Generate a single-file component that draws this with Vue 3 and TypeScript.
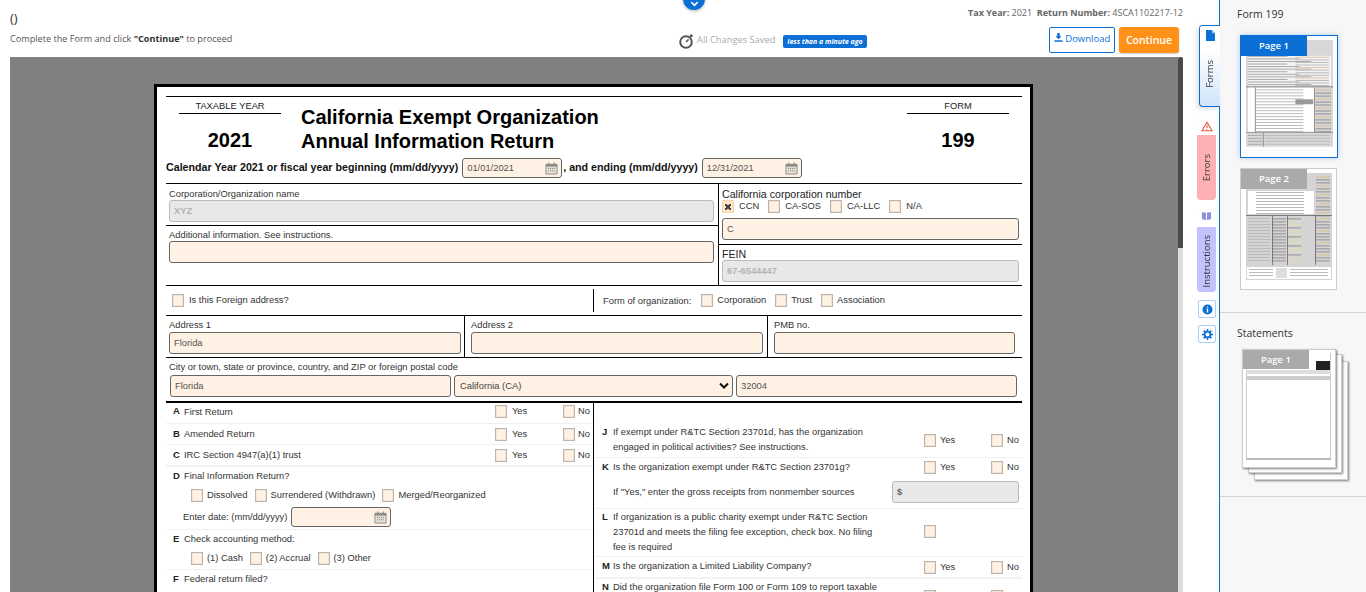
<script setup lang="ts">
interface Bar {
  x: number
  y: number
  w: number
  h: number
  c: string
}

const corpTypes = ['CCN', 'CA-SOS', 'CA-LLC', 'N/A']
const orgTypes = ['Corporation', 'Trust', 'Association']
const simpleRows = [
  { letter: 'A', text: 'First Return', cls: 'row-a' },
  { letter: 'B', text: 'Amended Return', cls: 'row-b' },
  { letter: 'C', text: 'IRC Section 4947(a)(1) trust', cls: 'row-c' },
]
const finalTypes = ['Dissolved', 'Surrendered (Withdrawn)', 'Merged/Reorganized']
const methods = ['(1) Cash', '(2) Accrual', '(3) Other']

// rough bars for the blurred page previews
const pageOneBars = (): Bar[] => {
  const bars: Bar[] = [{ x: 0, y: 0, w: 88, h: 112, c: '#d8d8d8' }]
  bars.push({ x: 2, y: 16, w: 84, h: 32, c: '#f2f2f2' })
  bars.push({ x: 2, y: 48, w: 68, h: 45, c: '#fff' })
  for (let i = 0; i < 12; i++) {
    bars.push({ x: 2, y: 16 + i * 2.6, w: 40 + (i % 3) * 12, h: 1, c: '#aaa' })
    bars.push({ x: 50, y: 17 + i * 2.6, w: 34, h: 1, c: i % 4 ? '#bbb' : '#d8c9a8' })
  }
  for (let i = 0; i < 15; i++) {
    bars.push({ x: 10, y: 50 + i * 3, w: 48, h: 1, c: '#bbb' })
    bars.push({ x: 70, y: 50 + i * 3, w: 16, h: 1.6, c: i % 3 ? '#aaa' : '#d8c9a8' })
  }
  bars.push({ x: 9, y: 48, w: 0.8, h: 46, c: '#777' })
  bars.push({ x: 69, y: 48, w: 0.8, h: 46, c: '#777' })
  bars.push({ x: 0, y: 47, w: 88, h: 0.8, c: '#666' })
  bars.push({ x: 50, y: 60, w: 18, h: 5, c: '#999' })
  bars.push({ x: 0, y: 93, w: 88, h: 0.8, c: '#888' })
  bars.push({ x: 17, y: 94, w: 0.8, h: 14, c: '#777' })
  for (let i = 0; i < 4; i++) {
    bars.push({ x: 2, y: 96 + i * 3, w: 14, h: 1, c: '#aaa' })
    bars.push({ x: 19, y: 96 + i * 3, w: 66, h: 1, c: '#bbb' })
  }
  bars.push({ x: 0, y: 108, w: 88, h: 4, c: '#fff' })
  return bars
}

const pageTwoBars = (): Bar[] => {
  const bars: Bar[] = [{ x: 0, y: 0, w: 86, h: 111, c: '#d4d4d4' }]
  bars.push({ x: 2, y: 18, w: 66, h: 23, c: '#fff' })
  for (let i = 0; i < 14; i++) {
    bars.push({ x: 70, y: 3 + i * 3, w: 14, h: 1.6, c: i % 3 ? '#aaa' : '#d8c9a8' })
    if (i < 8) bars.push({ x: 10, y: 19 + i * 3, w: 48, h: 1, c: '#bbb' })
  }
  bars.push({ x: 0, y: 42, w: 86, h: 0.8, c: '#666' })
  for (let i = 0; i < 15; i++) {
    bars.push({ x: 2, y: 45 + i * 3, w: 22, h: 1, c: '#bbb' })
    bars.push({ x: 26, y: 45 + i * 3, w: 14, h: 1.6, c: '#aaa' })
    bars.push({ x: 41, y: 45 + i * 3, w: 14, h: 1.6, c: i % 3 ? '#e0d8c0' : '#aaa' })
    bars.push({ x: 70, y: 45 + i * 3, w: 14, h: 1.6, c: i % 4 ? '#aaa' : '#d8c9a8' })
  }
  bars.push({ x: 26, y: 42, w: 0.8, h: 50, c: '#666' })
  bars.push({ x: 41, y: 42, w: 0.8, h: 50, c: '#666' })
  bars.push({ x: 69, y: 42, w: 0.8, h: 50, c: '#666' })
  bars.push({ x: 1, y: 94, w: 84, h: 12, c: '#fff' })
  bars.push({ x: 30, y: 95, w: 11, h: 10, c: '#ddd' })
  for (let i = 0; i < 3; i++) {
    bars.push({ x: 3, y: 96 + i * 3, w: 24, h: 1, c: '#bbb' })
    bars.push({ x: 44, y: 96 + i * 3, w: 38, h: 1, c: '#bbb' })
  }
  bars.push({ x: 0, y: 107, w: 86, h: 4, c: '#fff' })
  return bars
}

const p1 = pageOneBars()
const p2 = pageTwoBars()
</script>

<template>
  <div class="app">
    <section class="main">
      <header class="top">
        <div class="top-left">
          <div class="zero">()</div>
          <p class="hint">Complete the Form and click <b>"Continue"</b> to proceed</p>
        </div>
        <div class="saved">
          <svg class="timer" viewBox="0 0 16 16" width="16" height="16">
            <circle cx="8" cy="9" r="5.8" fill="none" stroke="#555" stroke-width="2" />
            <path d="M8 9l2.6-2.6" stroke="#555" stroke-width="1.6" />
            <circle cx="13.2" cy="2.8" r="1.5" fill="#555" />
          </svg>
          <span class="saved-text">All Changes Saved</span>
          <span class="ago">less than a minute ago</span>
        </div>
        <div class="top-right">
          <div class="meta"><b>Tax Year:</b> 2021 &nbsp;<b>Return Number:</b> 4SCA1102217-12</div>
          <div class="actions">
            <button class="btn-download">
              <svg viewBox="0 0 10 10" width="9" height="9">
                <path d="M3.6 0h2.8v3.6h2L5 7 1.6 3.6h2zM.5 8h9v1.8h-9z" fill="#0b6fd6" />
              </svg>
              Download
            </button>
            <button class="btn-continue">Continue</button>
          </div>
        </div>
      </header>

      <div class="collapse">
        <svg viewBox="0 0 10 10" width="9" height="9">
          <path d="M1.5 3.5L5 7l3.5-3.5" fill="none" stroke="#fff" stroke-width="1.8" />
        </svg>
      </div>

      <div class="viewer-wrap">
        <div class="viewer">
          <div class="paper">
            <div class="form-head">
              <div class="side-col">
                <div class="small-head">TAXABLE YEAR</div>
                <div class="big">2021</div>
              </div>
              <h1 class="title">California Exempt Organization<br />Annual Information Return</h1>
              <div class="side-col right-col">
                <div class="small-head">FORM</div>
                <div class="big">199</div>
              </div>
            </div>

            <div class="cal-row">
              <span>Calendar Year 2021 or fiscal year beginning (mm/dd/yyyy)</span>
              <div class="date-field">
                01/01/2021
                <svg class="cal" viewBox="0 0 14 14" width="13" height="14">
                  <path d="M1 3h12v10.5H1z" fill="#e4e0d8" stroke="#8a8a8a" />
                  <path d="M1 3h12v2.5H1z" fill="#8a8a8a" />
                  <path d="M4 1v3M10 1v3" stroke="#8a8a8a" stroke-width="1.2" />
                  <path d="M3.5 7.5h7M3.5 10h7" stroke="#777" stroke-dasharray="1 1" />
                </svg>
              </div>
              <span class="and">, and ending (mm/dd/yyyy)</span>
              <div class="date-field">
                12/31/2021
                <svg class="cal" viewBox="0 0 14 14" width="13" height="14">
                  <path d="M1 3h12v10.5H1z" fill="#e4e0d8" stroke="#8a8a8a" />
                  <path d="M1 3h12v2.5H1z" fill="#8a8a8a" />
                  <path d="M4 1v3M10 1v3" stroke="#8a8a8a" stroke-width="1.2" />
                  <path d="M3.5 7.5h7M3.5 10h7" stroke="#777" stroke-dasharray="1 1" />
                </svg>
              </div>
            </div>

            <div class="org-block">
              <div class="org-left">
                <div class="cell name-cell">
                  <label class="lbl">Corporation/Organization name</label>
                  <div class="field off">XYZ</div>
                </div>
                <div class="cell extra-cell">
                  <label class="lbl">Additional information. See instructions.</label>
                  <div class="field"></div>
                </div>
              </div>
              <div class="org-right">
                <div class="cell ccn-cell">
                  <label class="lbl-big">California corporation number</label>
                  <div class="checks">
                    <span v-for="(c, i) in corpTypes" :key="c" class="check">
                      <i class="box" :class="{ checked: i === 0 }"></i>{{ c }}
                    </span>
                  </div>
                  <div class="field">C</div>
                </div>
                <div class="cell fein-cell">
                  <label class="lbl-big">FEIN</label>
                  <div class="field off">67-6544447</div>
                </div>
              </div>
            </div>

            <div class="foreign-row">
              <div class="foreign-left">
                <span class="check"><i class="box"></i>Is this Foreign address?</span>
              </div>
              <div class="foreign-right">
                <span class="org-label">Form of organization:</span>
                <span v-for="o in orgTypes" :key="o" class="check"><i class="box"></i>{{ o }}</span>
              </div>
            </div>

            <div class="addr-row">
              <div class="addr a1">
                <label class="lbl">Address 1</label>
                <div class="field">Florida</div>
              </div>
              <div class="addr a2">
                <label class="lbl">Address 2</label>
                <div class="field"></div>
              </div>
              <div class="addr a3">
                <label class="lbl">PMB no.</label>
                <div class="field"></div>
              </div>
            </div>

            <div class="city-row">
              <label class="lbl">City or town, state or province, country, and ZIP or foreign postal code</label>
              <div class="city-fields">
                <div class="field city">Florida</div>
                <div class="field state">
                  California (CA)
                  <svg viewBox="0 0 10 8" width="10" height="8">
                    <path d="M1 1.5l4 4 4-4" fill="none" stroke="#111" stroke-width="2" />
                  </svg>
                </div>
                <div class="field zip">32004</div>
              </div>
            </div>

            <div class="questions">
              <div class="q-left">
                <div v-for="r in simpleRows" :key="r.letter" class="q-row" :class="r.cls">
                  <b class="letter">{{ r.letter }}</b>
                  <span class="q-text">{{ r.text }}</span>
                  <span class="check yes"><i class="box"></i>Yes</span>
                  <span class="check no"><i class="box"></i>No</span>
                </div>
                <div class="q-block row-d">
                  <div class="q-head"><b class="letter">D</b><span>Final Information Return?</span></div>
                  <div class="opt-row">
                    <span v-for="f in finalTypes" :key="f" class="check"><i class="box"></i>{{ f }}</span>
                  </div>
                  <div class="date-row">
                    <span>Enter date: (mm/dd/yyyy)</span>
                    <div class="date-field">
                      <svg class="cal" viewBox="0 0 14 14" width="13" height="14">
                        <path d="M1 3h12v10.5H1z" fill="#e4e0d8" stroke="#8a8a8a" />
                        <path d="M1 3h12v2.5H1z" fill="#8a8a8a" />
                        <path d="M4 1v3M10 1v3" stroke="#8a8a8a" stroke-width="1.2" />
                        <path d="M3.5 7.5h7M3.5 10h7" stroke="#777" stroke-dasharray="1 1" />
                      </svg>
                    </div>
                  </div>
                </div>
                <div class="q-block row-e">
                  <div class="q-head"><b class="letter">E</b><span>Check accounting method:</span></div>
                  <div class="opt-row">
                    <span v-for="m in methods" :key="m" class="check"><i class="box"></i>{{ m }}</span>
                  </div>
                </div>
                <div class="q-block row-f">
                  <div class="q-head"><b class="letter">F</b><span>Federal return filed?</span></div>
                </div>
              </div>

              <div class="q-right">
                <div class="r-row row-j">
                  <b class="letter">J</b>
                  <span class="r-text">If exempt under R&amp;TC Section 23701d, has the organization<br />engaged in political activities? See instructions.</span>
                  <span class="check yes"><i class="box"></i>Yes</span>
                  <span class="check no"><i class="box"></i>No</span>
                </div>
                <div class="row-k">
                  <div class="r-row k-top">
                    <b class="letter">K</b>
                    <span class="r-text">Is the organization exempt under R&amp;TC Section 23701g?</span>
                    <span class="check yes"><i class="box"></i>Yes</span>
                    <span class="check no"><i class="box"></i>No</span>
                  </div>
                  <div class="r-row k-sub">
                    <b class="letter"></b>
                    <span class="r-text">If "Yes," enter the gross receipts from nonmember sources</span>
                    <div class="field off money">$</div>
                  </div>
                </div>
                <div class="r-row row-l">
                  <b class="letter">L</b>
                  <span class="r-text">If organization is a public charity exempt under R&amp;TC Section<br />23701d and meets the filing fee exception, check box. No filing<br />fee is required</span>
                  <span class="check yes"><i class="box"></i></span>
                </div>
                <div class="r-row row-m">
                  <b class="letter">M</b>
                  <span class="r-text">Is the organization a Limited Liability Company?</span>
                  <span class="check yes"><i class="box"></i>Yes</span>
                  <span class="check no"><i class="box"></i>No</span>
                </div>
                <div class="r-row row-n">
                  <b class="letter">N</b>
                  <span class="r-text">Did the organization file Form 100 or Form 109 to report taxable</span>
                  <span class="check yes"><i class="box"></i>Yes</span>
                  <span class="check no"><i class="box"></i>No</span>
                </div>
              </div>
            </div>
          </div>
        </div>
        <div class="scrollbar"><div class="thumb"></div></div>
      </div>
    </section>

    <nav class="tabs">
      <div class="tab tab-forms">
        <div class="tab-icon">
          <svg viewBox="0 0 10 12" width="9" height="11">
            <path d="M0 0h6.5L10 3.5V12H0z" fill="#0b6fd6" />
            <path d="M6.5 0v3.5H10" fill="#8cc0f2" />
          </svg>
        </div>
        <span class="tab-label">Forms</span>
      </div>
      <div class="tab tab-errors">
        <div class="tab-icon">
          <svg viewBox="0 0 14 12" width="12" height="11">
            <path d="M7 1l6 10H1z" fill="#fff" stroke="#e2553a" stroke-width="1.3" />
            <path d="M7 4.5v3.3M7 8.8v1" stroke="#e2553a" stroke-width="1.2" />
          </svg>
        </div>
        <span class="tab-label">Errors</span>
      </div>
      <div class="tab tab-instr">
        <div class="tab-icon">
          <svg viewBox="0 0 12 11" width="11" height="10">
            <path d="M1 1l4.5 1v8L1 9zM11 1L6.5 2v8L11 9z" fill="#8f8fe0" />
          </svg>
        </div>
        <span class="tab-label">Instructions</span>
      </div>
      <button class="mini info">
        <svg viewBox="0 0 12 12" width="11" height="11">
          <circle cx="6" cy="6" r="5.5" fill="#0b6fd6" />
          <path d="M6 2.6v1.2M6 5v4.2" stroke="#fff" stroke-width="1.5" />
        </svg>
      </button>
      <button class="mini gear">
        <svg viewBox="0 0 12 12" width="11" height="11">
          <circle cx="6" cy="6" r="3.2" fill="none" stroke="#0b6fd6" stroke-width="2" />
          <path d="M6 0v2.5M6 9.5V12M0 6h2.5M9.5 6H12M1.8 1.8l1.8 1.8M8.4 8.4l1.8 1.8M10.2 1.8L8.4 3.6M3.6 8.4l-1.8 1.8" stroke="#0b6fd6" stroke-width="1.7" />
        </svg>
      </button>
    </nav>

    <aside class="side">
      <section class="side-forms">
        <h3>Form 199</h3>
        <div class="thumb-page active">
          <div class="page-tag">Page 1</div>
          <svg class="preview" viewBox="0 0 88 112">
            <rect v-for="(b, i) in p1" :key="i" :x="b.x" :y="b.y" :width="b.w" :height="b.h" :fill="b.c" />
          </svg>
        </div>
        <div class="thumb-page second">
          <div class="page-tag">Page 2</div>
          <svg class="preview" viewBox="0 0 86 111">
            <rect v-for="(b, i) in p2" :key="i" :x="b.x" :y="b.y" :width="b.w" :height="b.h" :fill="b.c" />
          </svg>
        </div>
      </section>
      <section class="side-statements">
        <h3>Statements</h3>
        <div class="stack">
          <div class="sheet back2"></div>
          <div class="sheet back1"></div>
          <div class="sheet front">
            <div class="page-tag">Page 1</div>
            <div class="stmt-frame"></div>
            <div class="stmt-logo"></div>
            <div class="stmt-line one"></div>
            <div class="stmt-line two"></div>
            <div class="stmt-foot"></div>
          </div>
        </div>
      </section>
    </aside>
  </div>
</template>

<style scoped>
.app {
  display: flex;
  width: 1366px;
  height: 592px;
  overflow: hidden;
  background: #fff;
  font-family: "Liberation Sans", Arial, sans-serif;
}
.main {
  position: relative;
  width: 1198px;
  flex: none;
  display: flex;
  flex-direction: column;
}
.top {
  height: 57px;
  flex: none;
  display: flex;
  padding-left: 10px;
  font-family: "Open Sans", sans-serif;
}
.top-left {
  width: 658px;
  flex: none;
}
.zero {
  font-size: 13px;
  line-height: 14px;
  margin-top: 11px;
  color: #333;
}
.hint {
  margin: 7px 0 0;
  font-size: 9.15px;
  line-height: 13px;
  color: #555;
}
.hint b {
  color: #333;
}
.saved {
  display: flex;
  align-items: center;
  height: 16px;
  margin-top: 33px;
  margin-left: 10px;
}
.saved-text {
  margin-left: 3px;
  margin-bottom: 4px;
  font-size: 9.3px;
  color: #aaa;
}
.ago {
  margin-left: 8px;
  background: #0b6fd6;
  color: #fff;
  border-radius: 2px;
  font-size: 7px;
  font-weight: 700;
  font-style: italic;
  line-height: 13px;
  padding: 0 4px;
  white-space: nowrap;
}
.top-right {
  margin-left: auto;
  padding-right: 15px;
  display: flex;
  flex-direction: column;
  align-items: flex-end;
}
.meta {
  margin-top: 7px;
  font-size: 9px;
  line-height: 12px;
  color: #666;
  white-space: nowrap;
}
.actions {
  display: flex;
  gap: 4px;
  margin-top: 8px;
  margin-right: 4px;
}
.btn-download {
  width: 66px;
  height: 26px;
  box-sizing: border-box;
  background: #fff;
  border: 1px solid #0b6fd6;
  border-radius: 2px;
  color: #0b6fd6;
  font: 9.5px "Open Sans", sans-serif;
  padding: 0 0 4px;
}
.btn-continue {
  width: 60px;
  height: 26px;
  border: 0;
  border-radius: 3px;
  background: #ff9119;
  color: #fff;
  font: 600 10.5px "Open Sans", sans-serif;
  box-shadow: 0 1px 2px rgba(0, 0, 0, 0.2);
}
.collapse {
  position: absolute;
  left: 683px;
  top: -12px;
  width: 22px;
  height: 22px;
  border-radius: 50%;
  background: #0b6fd6;
  box-shadow: 0 1px 3px rgba(0, 0, 0, 0.3);
  display: flex;
  align-items: flex-end;
  justify-content: center;
}
.collapse svg {
  margin-bottom: 2px;
}
.viewer-wrap {
  flex: 1;
  min-height: 0;
  display: flex;
  padding-left: 10px;
}
.viewer {
  width: 1168px;
  flex: none;
  background: #808080;
  overflow: hidden;
  padding-top: 27px;
  box-sizing: border-box;
}
.scrollbar {
  width: 5px;
  background: #ddd;
}
.thumb {
  height: 191px;
  background: #4a4a4a;
  border-radius: 2px 2px 0 0;
}

/* the form page */
.paper {
  box-sizing: border-box;
  width: 879px;
  margin-left: 144px;
  background: #fff;
  border: 3px solid #000;
  padding: 9px 8px 0 9px;
  font-size: 9.35px;
  color: #333;
}
.form-head {
  display: flex;
  height: 60px;
  border-top: 1px solid #000;
  padding-left: 13px;
  padding-right: 13px;
}
.side-col {
  width: 102px;
  flex: none;
  text-align: center;
}
.small-head {
  height: 16px;
  line-height: 19px;
  font-size: 9.35px;
  border-bottom: 1px solid #000;
  color: #222;
}
.big {
  margin-top: 14px;
  font-size: 20px;
  line-height: 24px;
  font-weight: 700;
  color: #000;
}
.title {
  flex: 1;
  margin: 8px 0 0 20px;
  font-size: 20px;
  line-height: 24px;
  font-weight: 700;
  color: #000;
}
.cal-row {
  display: flex;
  align-items: flex-start;
  height: 27px;
  border-bottom: 1px solid #000;
  box-sizing: border-box;
  font-size: 10.68px;
  font-weight: 700;
  color: #111;
  line-height: 20px;
}
.cal-row > span {
  white-space: nowrap;
}
.cal-row .date-field {
  margin-left: 4px;
  margin-top: 1px;
}
.cal-row .and {
  margin-left: 1px;
}
.date-field {
  box-sizing: border-box;
  width: 100px;
  height: 20px;
  display: flex;
  align-items: center;
  justify-content: space-between;
  padding: 0 3px 0 4px;
  background: #fff1e3;
  border: 1px solid #666;
  border-radius: 3px;
  font-size: 9.35px;
  font-weight: 400;
  color: #555;
}
.date-field .cal {
  margin-left: auto;
}
.org-block {
  display: flex;
  height: 102px;
  border-bottom: 1px solid #000;
  box-sizing: border-box;
}
.org-left {
  width: 552px;
  flex: none;
  border-right: 1px solid #000;
}
.org-right {
  flex: 1;
}
.cell {
  box-sizing: border-box;
}
.name-cell {
  height: 42px;
  padding: 4px 4px 0 3px;
  border-bottom: 1px solid #000;
}
.extra-cell {
  padding: 3px 4px 0 3px;
}
.lbl {
  display: block;
  font-size: 9.35px;
  line-height: 12px;
  color: #333;
}
.lbl-big {
  display: block;
  font-size: 10.6px;
  line-height: 12px;
  color: #222;
}
.field {
  box-sizing: border-box;
  height: 22px;
  line-height: 20px;
  padding: 0 4px;
  background: #fff1e3;
  border: 1px solid #666;
  border-radius: 3px;
  font-size: 9.35px;
  color: #555;
}
.field.off {
  background: #e8e8e8;
  border-color: #bbb;
  color: #b4b4b4;
  font-weight: 700;
}
.ccn-cell {
  height: 61px;
  padding: 4px 3px 0 3px;
  border-bottom: 1px solid #000;
}
.fein-cell {
  padding: 3px 3px 0 3px;
}
.checks {
  display: flex;
  align-items: flex-start;
  gap: 9px;
  height: 18px;
}
.checks .check {
  gap: 5px;
}
.check {
  display: inline-flex;
  align-items: center;
  gap: 4px;
  white-space: nowrap;
  font-size: 9.35px;
  line-height: 13px;
  color: #333;
}
.box {
  display: block;
  box-sizing: border-box;
  width: 12px;
  height: 13px;
  flex: none;
  background: #fff1e3;
  border: 1px solid #bdb5ab;
  box-shadow: inset 0 0 1px #888;
  position: relative;
}
.box.checked {
  background: #fde3c8;
  border-color: #fbd3a8;
  box-shadow: none;
}
.box.checked::after {
  content: "";
  position: absolute;
  left: 2px;
  top: 3px;
  width: 6px;
  height: 6px;
  background:
    linear-gradient(45deg, transparent 38%, #444 38%, #444 62%, transparent 62%),
    linear-gradient(-45deg, transparent 38%, #444 38%, #444 62%, transparent 62%);
}
.foreign-row {
  display: flex;
  height: 30px;
  border-bottom: 1px solid #000;
  box-sizing: border-box;
  align-items: center;
}
.foreign-left {
  width: 428px;
  flex: none;
  height: 23px;
  padding-left: 6px;
  display: flex;
  align-items: center;
  border-right: 1px solid #000;
  box-sizing: border-box;
}
.foreign-left .check {
  gap: 5px;
}
.foreign-right {
  display: flex;
  align-items: center;
  gap: 9px;
  padding-left: 9px;
}
.org-label {
  margin-right: 1px;
}
.addr-row {
  display: flex;
  height: 42px;
  border-bottom: 1px solid #000;
  box-sizing: border-box;
}
.addr {
  box-sizing: border-box;
  padding: 3px 3px 0 3px;
  border-right: 1px solid #000;
}
.addr .field {
  margin-top: 1px;
}
.a1 {
  width: 299px;
}
.a2 {
  width: 303px;
  padding-left: 6px;
  padding-right: 4px;
}
.a3 {
  flex: 1;
  padding-left: 6px;
  padding-right: 7px;
  border-right: 0;
}
.city-row {
  height: 45px;
  box-sizing: border-box;
  padding: 3px 0 0 3px;
  border-bottom: 2px solid #000;
}
.city-fields {
  display: flex;
  gap: 3px;
  margin-top: 2px;
  padding-left: 1px;
}
.city {
  width: 281px;
}
.state {
  width: 279px;
  display: flex;
  align-items: center;
  justify-content: space-between;
  padding-right: 3px;
  padding-left: 5px;
  color: #444;
}
.zip {
  width: 281px;
}
.questions {
  display: flex;
  height: 190px;
  overflow: hidden;
}
.q-left {
  width: 428px;
  flex: none;
  border-right: 1px solid #000;
  box-sizing: border-box;
}
.q-right {
  flex: 1;
  margin-left: 1px;
}
.q-row,
.r-row {
  display: flex;
  box-sizing: border-box;
  border-bottom: 1px solid #f0f0f0;
}
.letter {
  width: 11px;
  flex: none;
  font-size: 9.5px;
  line-height: 15px;
  color: #222;
}
.q-row .letter,
.q-head .letter {
  margin-bottom: 2px;
}
.r-row .letter {
  margin-top: -1px;
}
.q-row {
  height: 21px;
  align-items: center;
  padding-left: 7px;
}
.q-text {
  width: 311px;
  flex: none;
}
.q-row .yes {
  width: 68px;
  flex: none;
  gap: 5px;
}
.q-row .no {
  overflow: hidden;
  flex: 1;
  gap: 3px;
  min-width: 0;
}
.row-a {
  padding-bottom: 3px;
}
.row-c {
  height: 22px;
  border-bottom: 2px solid #f2f2f2;
}
.q-block {
  box-sizing: border-box;
  padding-left: 7px;
  border-bottom: 1px solid #f0f0f0;
}
.row-d {
  height: 63px;
}
.row-e {
  height: 40px;
}
.row-f {
  border-bottom: 0;
}
.q-head {
  display: flex;
  align-items: center;
  height: 18px;
}
.opt-row {
  display: flex;
  gap: 7px;
  height: 17px;
  margin-top: 2px;
  align-items: center;
  padding-left: 18px;
}
.date-row {
  display: flex;
  align-items: center;
  gap: 4px;
  margin-top: 3px;
  padding-left: 10px;
}
.r-row {
  padding-left: 7px;
  align-items: flex-start;
}
.r-text {
  width: 311px;
  flex: none;
  line-height: 15px;
}
.r-row .yes {
  width: 67px;
  flex: none;
}
.row-j {
  height: 55px;
  padding-top: 22px;
}
.row-j .check {
  margin-top: 9px;
}
.row-k {
  border-bottom: 1px solid #f0f0f0;
  height: 50px;
}
.k-top {
  height: 19px;
  padding-top: 2px;
  border-bottom: 0;
}
.k-top .check {
  margin-top: 1px;
}
.k-sub {
  height: 30px;
  align-items: center;
  border-bottom: 0;
}
.field.money {
  width: 127px;
  margin-left: -32px;
  color: #666;
}
.row-l {
  height: 48px;
  padding-top: 1px;
}
.row-l .check {
  margin-top: 15px;
}
.row-m {
  height: 22px;
  padding-top: 2px;
  border-bottom: 2px solid #f2f2f2;
}
.row-m .check {
  margin-top: 2px;
}
.row-n {
  height: 20px;
  padding-top: 1px;
  border-bottom: 0;
}
.row-n .check {
  margin-top: 10px;
}

/* vertical tabs */
.tabs {
  position: relative;
  width: 22px;
  flex: none;
  box-sizing: border-box;
  border-right: 1px solid #0b6fd6;
  padding-top: 25px;
}
.tab {
  box-sizing: border-box;
  width: 20px;
  height: 82px;
  border-radius: 4px 0 0 4px;
  display: flex;
  flex-direction: column;
  align-items: center;
}
.tab-forms {
  width: 21px;
  border: 1px solid #0b6fd6;
  border-right: 0;
  background: linear-gradient(#fff, #fff 30%, #cfe5fb);
  box-shadow: -2px 2px 4px rgba(0, 0, 0, 0.12);
  position: relative;
  left: 1px;
}
.tab-errors {
  margin-top: 11px;
  background: #ffb0b5;
  border-radius: 4px;
  width: 19px;
  left: -1px;
  position: relative;
}
.tab-instr {
  margin-top: 10px;
  background: #c2c2fd;
  border-radius: 4px;
  width: 19px;
  left: -1px;
  position: relative;
}
.tab-icon {
  width: 100%;
  height: 17px;
  background: #fff;
  border-radius: 3px 3px 0 0;
  display: flex;
  align-items: center;
  justify-content: center;
  flex: none;
}
.tab-forms .tab-icon {
  height: 18px;
}
.tab-instr .tab-icon {
  align-items: flex-start;
  padding-top: 1px;
  box-sizing: border-box;
}
.tab-label {
  writing-mode: vertical-rl;
  transform: rotate(180deg);
  font: 9.5px "Open Sans", sans-serif;
  color: #333;
  margin-top: 16px;
}
.tab-forms .tab-label {
  margin-right: 1px;
}
.tab-errors .tab-label {
  margin-top: 19px;
}
.tab-instr .tab-label {
  margin-top: 8px;
}
.mini {
  display: flex;
  align-items: center;
  justify-content: center;
  box-sizing: border-box;
  width: 18px;
  height: 18px;
  padding: 0;
  background: #fff;
  border: 1px solid #a9cdf3;
  border-radius: 2px;
}
.info {
  margin-top: 8px;
}
.gear {
  margin-top: 7px;
}

/* thumbnails */
.side {
  flex: 1;
  background: #f7f7f7;
  font-family: "Open Sans", sans-serif;
}
.side h3 {
  margin: 0;
  font-size: 10.5px;
  font-weight: 400;
  line-height: 14px;
  color: #333;
}
.side-forms {
  height: 313px;
  box-sizing: border-box;
  padding: 7px 0 0 17px;
  border-bottom: 1px solid #d4d4d4;
}
.thumb-page {
  position: relative;
  box-sizing: border-box;
  background: #fff;
  margin-left: 3px;
}
.thumb-page.active {
  width: 98px;
  height: 123px;
  margin-top: 14px;
  border: 1px solid #0b6fd6;
  box-shadow: 0 0 5px rgba(11, 111, 214, 0.3);
  padding: 4px 4px 0 5px;
}
.thumb-page.second {
  width: 97px;
  height: 122px;
  margin-top: 10px;
  border: 1px solid #ccc;
  padding: 4px 4px 0 5px;
}
.preview {
  display: block;
  width: 100%;
  filter: blur(0.7px);
}
.page-tag {
  position: absolute;
  z-index: 1;
  left: 0;
  top: 0;
  width: 66px;
  height: 20px;
  line-height: 20px;
  text-align: center;
  background: #aaa;
  color: #fff;
  font-size: 9.5px;
  font-weight: 600;
}
.active .page-tag {
  background: #0b6fd6;
}
.side-statements {
  height: 184px;
  box-sizing: border-box;
  padding: 13px 0 0 17px;
  border-bottom: 1px solid #d4d4d4;
}
.stack {
  position: relative;
  margin: 9px 0 0 5px;
  width: 108px;
  height: 132px;
}
.sheet {
  position: absolute;
  width: 94px;
  height: 119px;
  background: #fff;
  border: 1px solid #ccc;
  box-sizing: border-box;
  box-shadow: 1px 1px 2px rgba(0, 0, 0, 0.5);
}
.back2 {
  left: 12px;
  top: 12px;
}
.back1 {
  left: 6px;
  top: 5px;
}
.front {
  left: 0;
  top: 0;
}
.stmt-frame {
  position: absolute;
  left: 3px;
  right: 4px;
  top: 3px;
  bottom: 8px;
  border-left: 1px solid #ccc;
  border-right: 1px solid #ccc;
}
.stmt-logo {
  position: absolute;
  right: 5px;
  top: 11px;
  width: 14px;
  height: 9px;
  background: #222;
}
.stmt-line {
  position: absolute;
  left: 3px;
  right: 4px;
  height: 4px;
  background: #ddd;
}
.stmt-line.one {
  top: 20px;
}
.stmt-line.two {
  top: 26px;
  background: #ccc;
}
.stmt-foot {
  position: absolute;
  left: 3px;
  right: 4px;
  bottom: 7px;
  height: 2px;
  background: #bbb;
}
.side-statements .page-tag {
  height: 19px;
}
</style>

<style>
body {
  margin: 0;
  overflow: hidden;
}
</style>
